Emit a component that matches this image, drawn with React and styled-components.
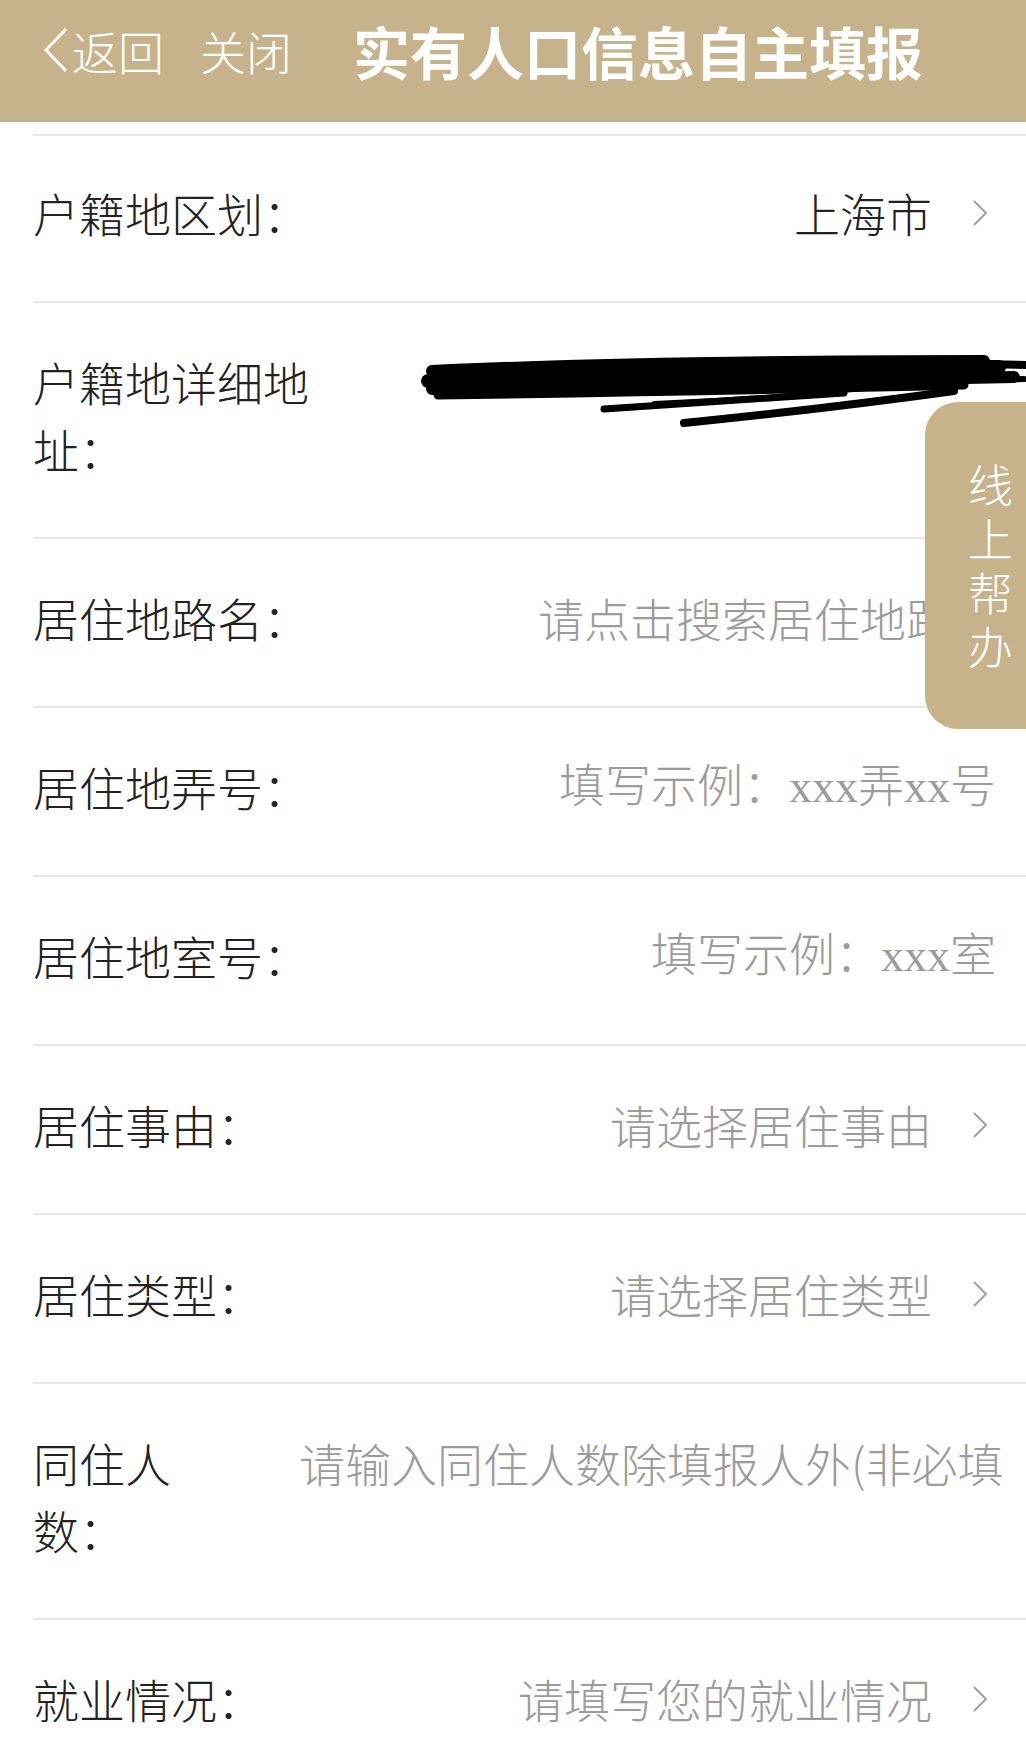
import React from 'react'
import styled, { createGlobalStyle } from 'styled-components'

const GOLD = '#c7b38b'

const GlobalStyle = createGlobalStyle`
  html, body {
    margin: 0;
    padding: 0;
    background: #fff;
  }
  body {
    font-family: "Noto Sans CJK SC", "Noto Sans", sans-serif;
  }
`

const Page = styled.div`
  position: relative;
  width: 1026px;
  min-height: 1750px;
  overflow: hidden;
  background: #fff;
`

const Header = styled.header`
  display: flex;
  align-items: flex-start;
  height: 122px;
  box-sizing: border-box;
  padding: 20px 0 0 42px;
  background: ${GOLD};
  color: #fff;
`

const NavLink = styled.span`
  display: flex;
  align-items: center;
  gap: 3px;
  font-size: 46px;
  font-weight: 300;
  line-height: 60px;
  margin-right: ${p => p.$gap}px;
`

const Title = styled.h1`
  margin: 0;
  font-size: 57px;
  font-weight: 700;
  line-height: 60px;
`

const Divider = styled.div`
  height: 12px;
  margin-left: 33px;
  border-bottom: 2px solid #e8e8e8;
`

const Row = styled.div`
  display: flex;
  align-items: flex-start;
  margin-left: 33px;
  padding: ${p => (p.$first ? 43 : 45)}px ${p => p.$pr}px 55px 0;
  border-bottom: 2px solid #e8e8e8;
  font-size: 46px;
  font-weight: 300;
  line-height: 67px;
`

const Label = styled.div`
  flex: 0 0 ${p => p.$width}px;
  color: #222;
`

const Value = styled.div`
  flex: 1;
  min-width: 0;
  margin-left: ${p => p.$indent}px;
  text-align: ${p => p.$align};
  white-space: nowrap;
  overflow: hidden;
  color: ${p => (p.$filled ? '#222' : '#9b9b9b')};
  font-family: ${p =>
    p.$serif ? '"Liberation Serif", "Noto Sans CJK SC", serif' : 'inherit'};
`

const Scribble = styled.div`
  flex: 1;
  margin: 5px -30px 0 ${p => p.$indent}px;
  height: 67px;
  svg {
    display: block;
    overflow: visible;
  }
`

const Arrow = styled.span`
  flex: 0 0 64px;
  display: flex;
  justify-content: flex-end;
  align-items: center;
  height: 67px;
  padding-right: 8px;
  box-sizing: border-box;
`

const HelpTab = styled.div`
  position: absolute;
  top: 402px;
  right: 0;
  width: 101px;
  height: 327px;
  box-sizing: border-box;
  padding: 55px 0 0 43px;
  border-radius: 33px 0 0 33px;
  background: ${GOLD};
  color: #fff;
  font-size: 45px;
  font-weight: 300;
  line-height: 54px;
  span {
    display: block;
    width: 46px;
  }
`

const rows = [
  { label: '户籍地区划：', value: '上海市', filled: true, arrow: true, first: true },
  { label: '户籍地详细地址：', scribble: true, width: 290, indent: 101 },
  { label: '居住地路名：', value: '请点击搜索居住地路名', align: 'left', indent: 205 },
  { label: '居住地弄号：', value: '填写示例：xxx弄xx号', serif: true },
  { label: '居住地室号：', value: '填写示例：xxx室', serif: true },
  { label: '居住事由：', value: '请选择居住事由', arrow: true },
  { label: '居住类型：', value: '请选择居住类型', arrow: true },
  { label: '同住人数：', value: '请输入同住人数除填报人外(非必填)', align: 'left', width: 150, indent: 116, pr: 22 },
  { label: '就业情况：', value: '请填写您的就业情况', arrow: true },
]

const BackIcon = () => (
  <svg width="27" height="46" viewBox="0 0 27 46">
    <polyline points="24,2 4,23 24,44" fill="none" stroke="#fff" strokeWidth="3" strokeLinejoin="miter" />
  </svg>
)

const ChevronIcon = () => (
  <svg width="16" height="28" viewBox="0 0 16 28">
    <polyline points="2,2 14,14 2,26" fill="none" stroke="#a0a0a0" strokeWidth="2" />
  </svg>
)

const ScribbleMark = () => (
  <svg width="602" height="80" viewBox="0 0 602 80">
    <g fill="none" stroke="#000" strokeLinecap="round">
      <path d="M8 18 Q 220 8 560 8" strokeWidth="12" />
      <path d="M4 28 Q 250 16 575 14" strokeWidth="14" />
      <path d="M8 36 Q 260 32 590 24" strokeWidth="12" />
      <path d="M14 42 Q 300 38 540 32" strokeWidth="9" />
      <path d="M60 24 L 520 24" strokeWidth="18" />
      <path d="M500 10 L 602 12" strokeWidth="8" />
      <path d="M500 28 L 600 26" strokeWidth="6" />
      <path d="M180 56 Q 300 48 420 40" strokeWidth="7" />
      <path d="M260 70 Q 400 56 530 38" strokeWidth="8" />
      <path d="M230 50 Q 350 45 460 34" strokeWidth="4" />
    </g>
  </svg>
)

export default function App() {
  return (
    <Page>
      <GlobalStyle />
      <Header>
        <NavLink $gap={36}>
          <BackIcon />
          返回
        </NavLink>
        <NavLink $gap={61}>关闭</NavLink>
        <Title>实有人口信息自主填报</Title>
      </Header>
      <Divider />
      {rows.map(r => (
        <Row key={r.label} $pr={r.pr ?? 30} $first={r.first}>
          <Label $width={r.width ?? 300}>{r.label}</Label>
          {r.scribble ? (
            <Scribble $indent={r.indent}>
              <ScribbleMark />
            </Scribble>
          ) : (
            <Value
              $indent={r.indent ?? 0}
              $align={r.align ?? 'right'}
              $filled={r.filled}
              $serif={r.serif}
            >
              {r.value}
            </Value>
          )}
          {r.arrow && (
            <Arrow>
              <ChevronIcon />
            </Arrow>
          )}
        </Row>
      ))}
      <HelpTab>
        <span>线上帮办</span>
      </HelpTab>
    </Page>
  )
}
